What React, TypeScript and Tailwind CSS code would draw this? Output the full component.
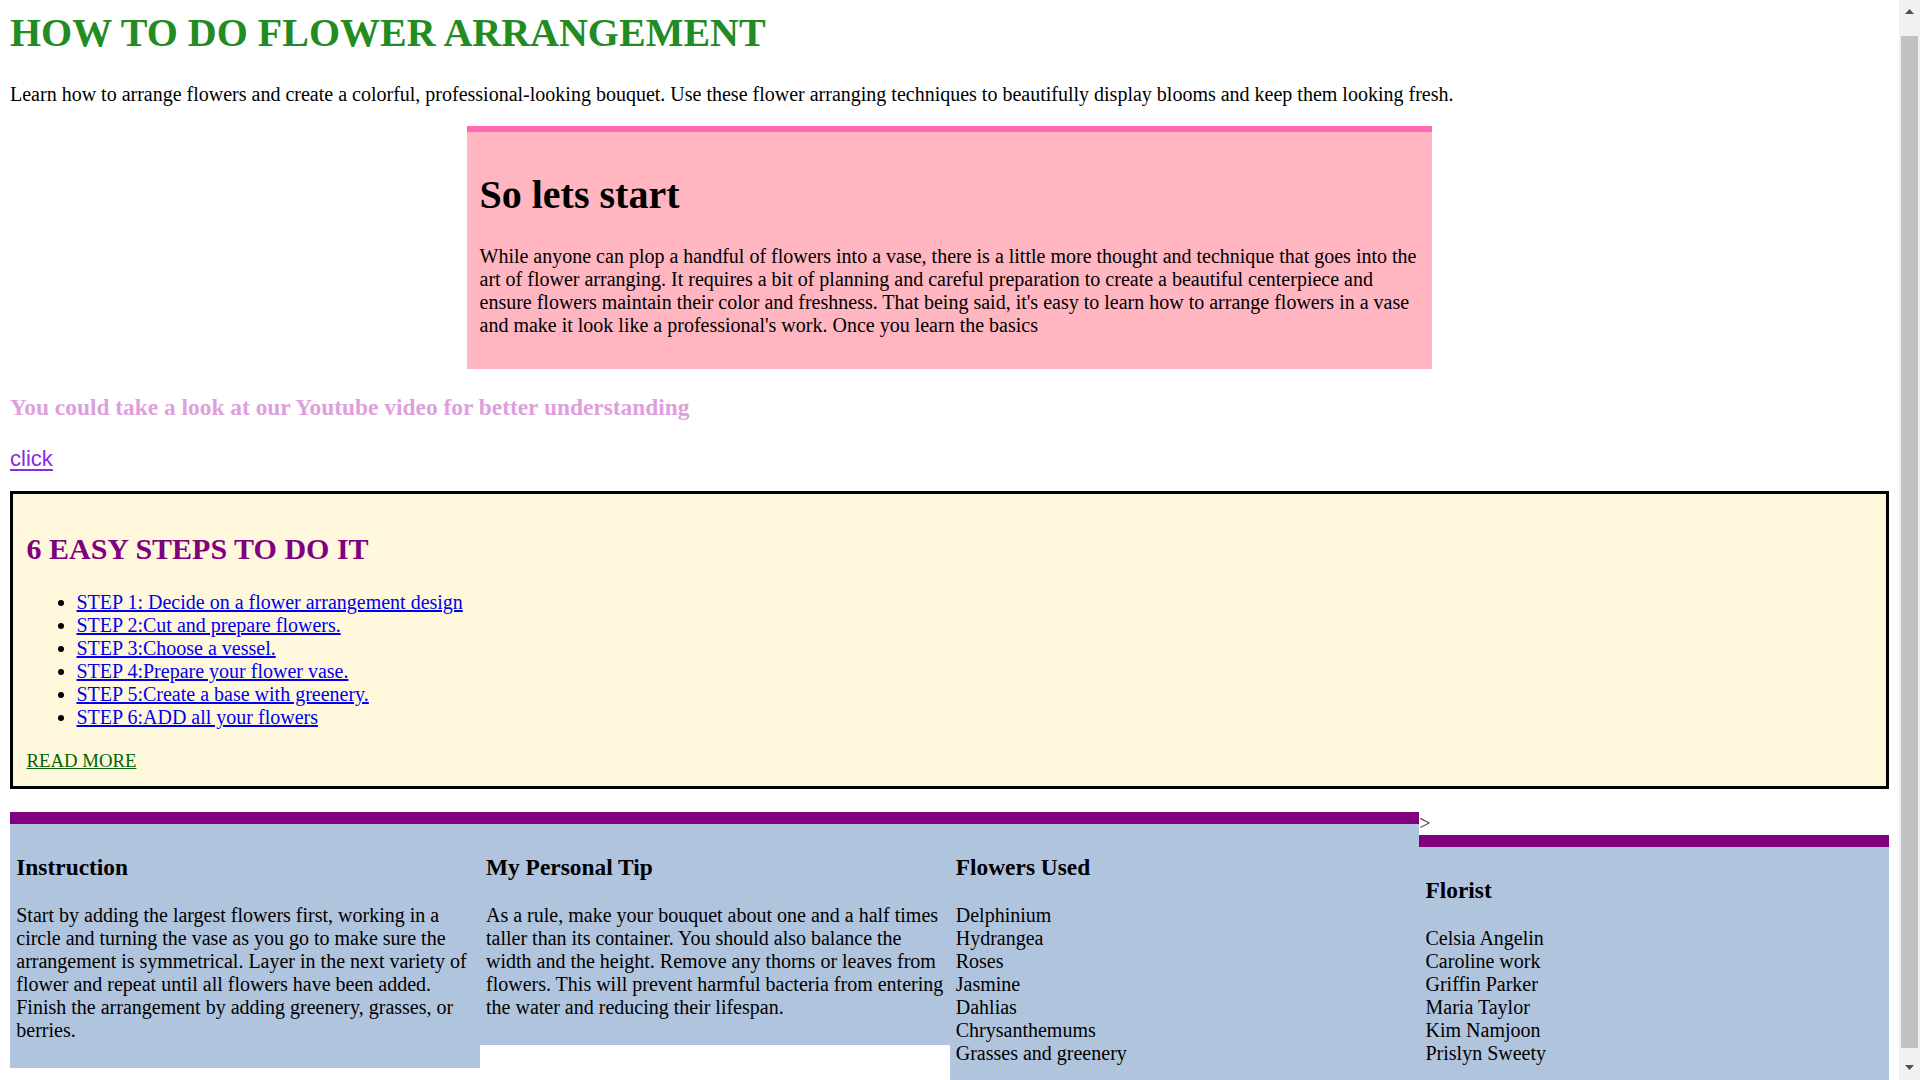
import React from "react";

const steps = [
  "STEP 1: Decide on a flower arrangement design",
  "STEP 2:Cut and prepare flowers.",
  "STEP 3:Choose a vessel.",
  "STEP 4:Prepare your flower vase.",
  "STEP 5:Create a base with greenery.",
  "STEP 6:ADD all your flowers",
];

const flowers = [
  "Delphinium",
  "Hydrangea",
  "Roses",
  "Jasmine",
  "Dahlias",
  "Chrysanthemums",
  "Grasses and greenery",
];

const florists = [
  "Celsia Angelin",
  "Caroline work",
  "Griffin Parker",
  "Maria Taylor",
  "Kim Namjoon",
  "Prislyn Sweety",
];

const colBox =
  "border-t-[12.5px] border-[#800080] bg-[#b0c4de] px-[6.25px] pt-[6.25px] pb-[6.25px]";
const colTitle = "mt-[23.4px] mb-[23.4px] text-[23.4px] leading-[27px] font-bold";

export default function App() {
  return (
    <div className="flex h-[1080px] w-full overflow-hidden bg-white text-black">
      <div className="flex-1 min-w-0 px-[10px] pt-[10px] font-['Liberation_Serif',serif] text-[20px] leading-[23px]">
        <h1 className="text-[40px] leading-[46px] font-bold text-[#228b22] mb-[27px]">
          HOW TO DO FLOWER ARRANGEMENT
        </h1>
        <p className="mb-[20px]">
          Learn how to arrange flowers and create a colorful, professional-looking bouquet. Use these flower arranging
          techniques to beautifully display blooms and keep them looking fresh.
        </p>

        {/* pink intro box */}
        <div className="mx-auto w-[965px] border-t-[6px] border-[#ff69b4] bg-[#ffb6c1] px-[12.5px] py-[12.5px]">
          <h1 className="mt-[27px] mb-[27px] text-[40px] leading-[46px] font-bold">So lets start</h1>
          <p className="mb-[20px]">
            While anyone can plop a handful of flowers into a vase, there is a little more thought and technique that
            goes into the art of flower arranging. It requires a bit of planning and careful preparation to create a
            beautiful centerpiece and ensure flowers maintain their color and freshness. That being said, it's easy to
            learn how to arrange flowers in a vase and make it look like a professional's work. Once you learn the
            basics
          </p>
        </div>

        <h3 className="mt-[24.5px] mb-[24px] text-[23.4px] leading-[27px] font-bold text-[#dda0dd]">
          You could take a look at our Youtube video for better understanding
        </h3>
        <p className="mb-[18.5px] leading-[28px]">
          <a
            href="#"
            className="font-['Liberation_Sans',sans-serif] text-[22px] text-[#8a2be2] underline decoration-2 underline-offset-[3px]"
          >
            click
          </a>
        </p>

        {/* steps box */}
        <div className="border-[3px] border-black bg-[#fff8dc] pl-[13.5px] pr-[12.5px] pt-[12.5px] pb-[14px]">
          <h2 className="mt-[25px] mb-[25px] text-[30px] leading-[34.5px] font-bold text-[#800080]">
            6 EASY STEPS TO DO IT
          </h2>
          <ul className="list-disc pl-[50px] mb-[20px]">
            {steps.map((s) => (
              <li key={s}>
                <a href="#" className="text-[#0000ee] underline">
                  {s}
                </a>
              </li>
            ))}
          </ul>
          <a href="#" className="text-[18.75px] text-[#006400] underline">
            READ MORE
          </a>
        </div>

        {/* bottom columns */}
        <div className="mt-[23px] flex items-start">
          <div className={"w-1/4 " + colBox}>
            <h3 className={colTitle}>Instruction</h3>
            <p className="mb-[20px]">
              Start by adding the largest flowers first, working in a circle and turning the vase as you go to make
              sure the arrangement is symmetrical. Layer in the next variety of flower and repeat until all flowers
              have been added. Finish the arrangement by adding greenery, grasses, or berries.
            </p>
          </div>
          <div className={"w-1/4 " + colBox}>
            <h3 className={colTitle}>My Personal Tip</h3>
            <p className="mb-[20px]">
              As a rule, make your bouquet about one and a half times taller than its container. You should also
              balance the width and the height. Remove any thorns or leaves from flowers. This will prevent harmful
              bacteria from entering the water and reducing their lifespan.
            </p>
          </div>
          <div className={"w-1/4 " + colBox}>
            <h3 className={colTitle}>Flowers Used</h3>
            <p className="mb-[20px]">
              {flowers.map((f) => (
                <span key={f} className="block">
                  {f}
                </span>
              ))}
            </p>
          </div>
          <div className="w-1/4">
            <div className="h-[23px] text-[#333]">&gt;</div>
            <div className={colBox}>
              <h3 className={colTitle}>Florist</h3>
              <p className="mb-[20px]">
                {florists.map((f) => (
                  <span key={f} className="block">
                    {f}
                  </span>
                ))}
              </p>
            </div>
          </div>
        </div>
      </div>

      {/* scrollbar */}
      <div className="flex w-[21px] shrink-0 flex-col bg-[#f1f1f1]">
        <div className="flex h-[36px] items-start justify-center pt-[9px]">
          <svg width="9" height="5" viewBox="0 0 9 5">
            <path d="M4.5 0 L9 5 L0 5 Z" fill="#505050" />
          </svg>
        </div>
        <div className="flex-1 ml-[2px] mr-[2px] bg-[#c1c1c1]" />
        <div className="flex h-[32px] items-start justify-center pt-[17px]">
          <svg width="9" height="5" viewBox="0 0 9 5">
            <path d="M0 0 L9 0 L4.5 5 Z" fill="#505050" />
          </svg>
        </div>
      </div>
    </div>
  );
}
